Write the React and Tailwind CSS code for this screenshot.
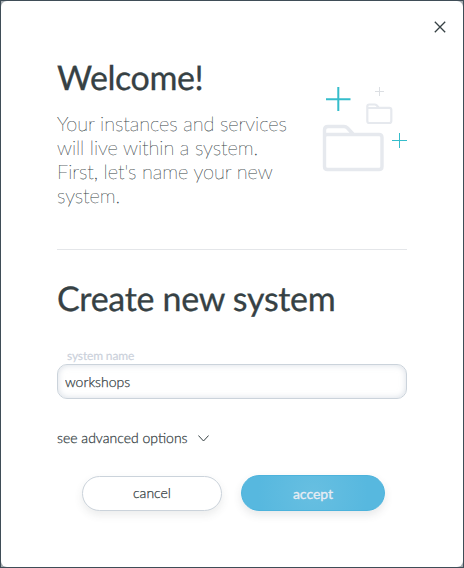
import React from "react";

function FolderArt() {
  return (
    <svg width="90" height="90" viewBox="320 84 90 90" fill="none" className="block shrink-0">
      <path d="M338.300 87v24M326 99.200h24.500" stroke="#35bdcb" strokeWidth="2" />
      <path d="M399.500 133v15M392 140.500h15" stroke="#35bdcb" strokeWidth="1" />
      <path d="M379.500 87v9M375 91.500h9" stroke="#dcdfe3" strokeWidth="1" />
      <g stroke="#e6e9ee" strokeLinejoin="round">
        <path strokeWidth="3.400" d="M324.500 134.500V130q0-3.500 3.500-3.500h16q2 0 3.500 1.500l6 6.500h25.500q3 0 3 3v29q0 3-3 3h-51.500q-3 0-3-3zM324.500 137q0-2.500 2.500-2.500h27" />
        <path strokeWidth="2.200" d="M367.300 108v-1.500q0-2 2-2h5.500q1 0 1.800.8l2.200 2.500h10.500q2 0 2 2v11.200q0 2-2 2h-20q-2 0-2-2zM367.500 108h12" />
      </g>
    </svg>
  );
}

export default function App() {
  return (
    <div className="h-[568px] w-[464px] bg-[#a4abb0] font-['Lato',sans-serif] text-[#364144] antialiased [text-rendering:geometricPrecision]">
      <div className="relative flex h-full flex-col border border-[#3f4d57]">
        <div className="flex h-full flex-col rounded-[6px] bg-white px-14">
          <button aria-label="close" className="absolute top-[20px] right-[17px]">
            <svg width="12" height="12" viewBox="0 0 12 12" stroke="#364144" strokeWidth="1.300" className="block">
              <path d="M.8.8l10.400 10.400M11.200.8L.8 11.200" />
            </svg>
          </button>
          <header className="mt-[55px] flex h-[194px] justify-between border-b border-[#e4e6e9]">
            <div className="w-[240px]">
              <h1 className="text-[34px] leading-[44px] font-normal tracking-[-0.4px] [-webkit-text-stroke:0.3px_#364144]">Welcome!</h1>
              <p className="mt-3 text-[20px] leading-6 font-thin tracking-[-0.06px] whitespace-nowrap [-webkit-text-stroke:0.2px_#364144]">
                Your instances and services<br />will live within a system.<br />First, let's name your new<br />system.
              </p>
            </div>
            <div className="-mr-[3px] mt-7"><FolderArt /></div>
          </header>
          <h2 className="mt-[27px] text-[34px] leading-[44px] font-normal tracking-[-0.3px] [-webkit-text-stroke:0.3px_#364144]">Create new system</h2>
          <label className="mt-[28px] ml-[10px] text-[12px] leading-[14px] tracking-[-0.15px] text-[#cbd1db] [-webkit-text-stroke:0.15px_#cbd1db]">system name</label>
          <input
            readOnly
            value="workshops"
            className="mt-px h-[35px] rounded-[10px] border border-[#cbd3db] px-[7px] text-[14px] font-light shadow-[inset_0_0_6px_rgba(180,192,205,0.55)] outline-none [-webkit-text-stroke:0.25px_#364144]"
          />
          <div className="mt-[28px] flex h-5 items-center text-[14px] font-light [-webkit-text-stroke:0.25px_#364144]">
            <span>see advanced options</span>
            <svg width="11" height="7" viewBox="0 0 11 7" fill="none" stroke="#364144" className="mt-[2px] ml-[10px]">
              <path d="M.4.500l5.100 5.500L10.600.500" />
            </svg>
          </div>
          <div className="mt-[28px] ml-[25px] flex items-center gap-[19px]">
            <button className="h-[35px] w-[140px] rounded-full border border-[#cbd3db] bg-white pb-[2px] text-[14px] font-light shadow-[0_4px_8px_rgba(55,65,71,0.1)] [-webkit-text-stroke:0.25px_#364144]">cancel</button>
            <button className="h-[36px] w-[144px] rounded-full border border-[#4db3dc] bg-[radial-gradient(circle,#67bfe1,#57b8df_75%)] text-[14px] text-[#e8edf4] shadow-[0_4px_8px_rgba(55,65,71,0.12)] [-webkit-text-stroke:0.3px_#e8edf4]">accept</button>
          </div>
        </div>
      </div>
    </div>
  );
}
